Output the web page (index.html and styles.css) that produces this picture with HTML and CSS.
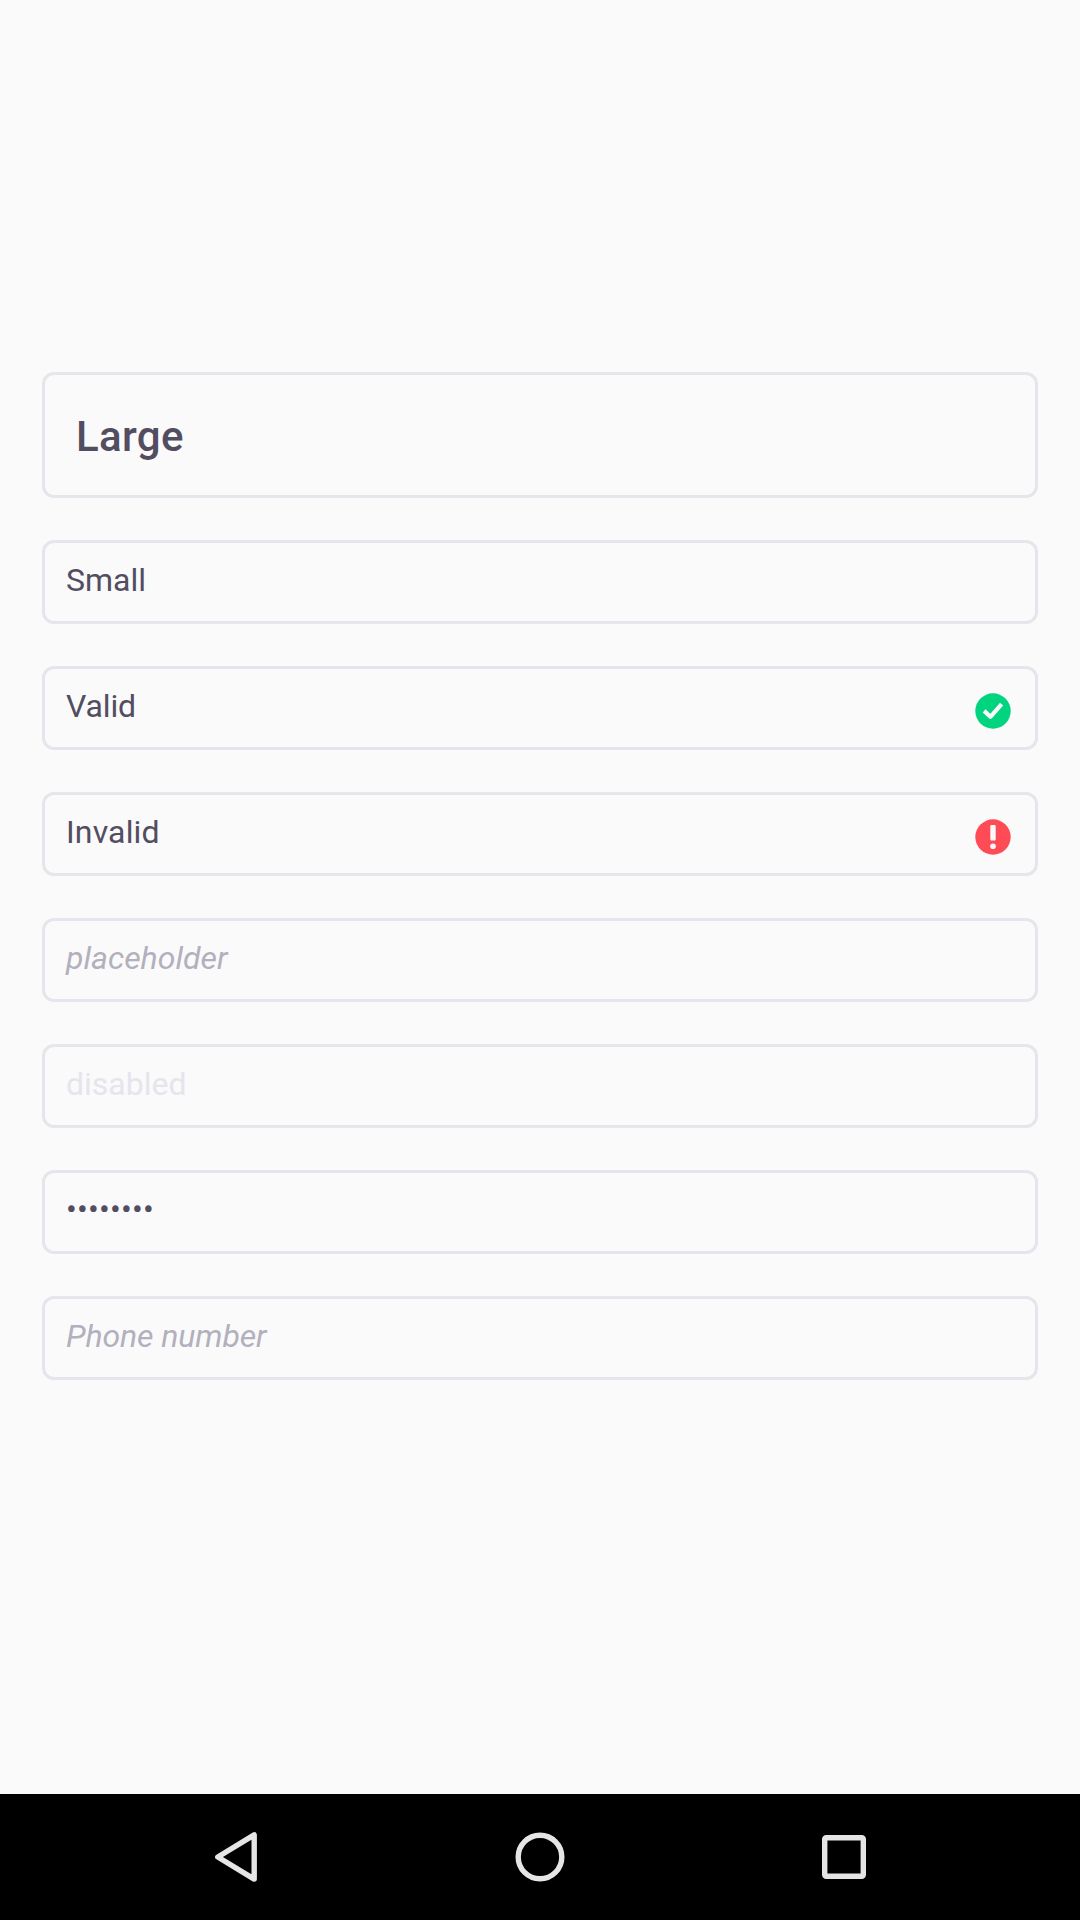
FILE: index.html
```html
<!DOCTYPE html>
<html lang="en">
<head>
<meta charset="utf-8">
<meta name="viewport" content="width=device-width, initial-scale=1">
<title>Inputs</title>
<link rel="stylesheet" href="styles.css">
</head>
<body>
<main class="form">
  <div class="field field-large"><span class="text">Large</span></div>
  <div class="field"><span class="text">Small</span></div>
  <div class="field valid"><span class="text">Valid</span>
    <svg class="status" viewBox="0 0 36 36"><circle cx="18" cy="18" r="17.7" fill="#00d47e"/><path d="M9.1 17.9l6.3 5.9L26.6 11.2" fill="none" stroke="#fafafa" stroke-width="4.2" stroke-linejoin="round"/></svg>
  </div>
  <div class="field invalid"><span class="text">Invalid</span>
    <svg class="status" viewBox="0 0 36 36"><circle cx="18" cy="18" r="17.7" fill="#ff4b55"/><rect x="15.3" y="6" width="5.4" height="15.6" rx="1" fill="#fafafa"/><circle cx="18" cy="27.3" r="2.8" fill="#fafafa"/></svg>
  </div>
  <div class="field placeholder"><span class="text">placeholder</span></div>
  <div class="field disabled"><span class="text">disabled</span></div>
  <div class="field password"><span class="text">••••••••</span></div>
  <div class="field placeholder phone"><span class="text">Phone number</span></div>
</main>
<nav class="navbar">
  <svg class="nav-icon" viewBox="0 0 60 60"><path d="M47.2 7.9v44.2L10.8 30z"/></svg>
  <svg class="nav-icon" viewBox="0 0 60 60"><circle cx="30" cy="30" r="21.8"/></svg>
  <svg class="nav-icon" viewBox="0 0 60 60"><rect x="11.7" y="10.7" width="38.6" height="38.6" rx="1.5"/></svg>
</nav>
</body>
</html>
```
FILE: styles.css
```css
* { box-sizing: border-box; }
body {
  margin: 0;
  height: 1920px;
  display: flex;
  flex-direction: column;
  background: #fafafa;
  color: #524d61;
  font-family: Roboto, sans-serif;
  overflow: hidden;
}
.form {
  flex: 1;
  padding: 372px 42px 0;
  display: flex;
  flex-direction: column;
  gap: 42px;
}
.field {
  height: 84px;
  padding: 18px 24px 0 21px;
  border: 3px solid #e6e5ec;
  border-radius: 12px;
  display: flex;
  justify-content: space-between;
  align-items: flex-start;
  font-size: 32px;
  line-height: 38px;
}
.field-large {
  height: 126px;
  padding: 37px 31px 0;
  font-size: 42px;
  line-height: 50px;
  font-weight: 500;
  letter-spacing: 0.35px;
}
.valid { letter-spacing: -0.15px; }
.invalid { letter-spacing: 0.15px; }
.placeholder { color: #b3b0be; font-style: italic; }
.phone { letter-spacing: -0.1px; }
.disabled { color: #e6e5ec; }
.password { padding-top: 17px; letter-spacing: 0.2px; }
.status { width: 36px; height: 36px; margin-top: 6px; }
.navbar {
  height: 126px;
  padding: 0 207px;
  background: #000;
  display: flex;
  align-items: center;
  justify-content: space-between;
}
.nav-icon {
  width: 60px;
  height: 60px;
  fill: none;
  stroke: #e5e5e5;
  stroke-width: 5.4;
  stroke-linejoin: round;
}
```
